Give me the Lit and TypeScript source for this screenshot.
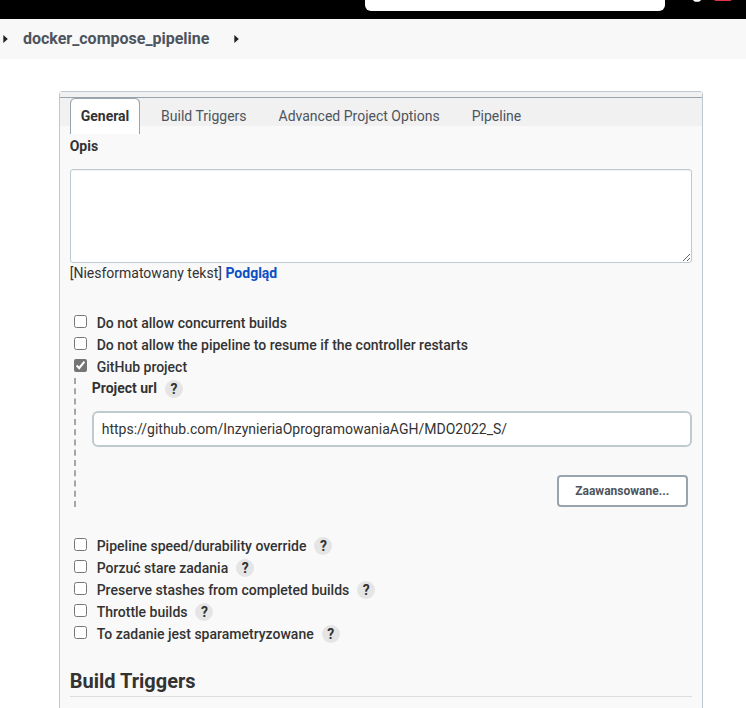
import { LitElement, html, css, nothing } from "lit";
import { customElement, property } from "lit/decorators.js";

@customElement("help-mark")
class HelpMark extends LitElement {
  static styles = css`
    :host {
      display: flex;
      align-items: center;
      justify-content: center;
      width: 18px;
      height: 18px;
      border-radius: 50%;
      background: #e5e5e5;
      color: #333;
      font: 700 14px/18px Roboto, sans-serif;
    }
  `;
  render() {
    return html`?`;
  }
}

@customElement("option-row")
class OptionRow extends LitElement {
  @property() label = "";
  @property({ type: Boolean }) checked = false;
  @property({ type: Boolean }) help = false;

  static styles = css`
    :host {
      display: flex;
      align-items: center;
      height: 22px;
      padding-left: 4px;
      font: 500 14px/22px Roboto, sans-serif;
      color: #333;
    }
    label {
      display: flex;
    }
    input {
      width: 13px;
      height: 13px;
      margin: 3px 10px 0 0;
      accent-color: #757575;
    }
    help-mark {
      margin-left: 8px;
    }
  `;
  render() {
    return html`
      <label><input type="checkbox" .checked=${this.checked} />${this.label}</label>
      ${this.help ? html`<help-mark></help-mark>` : nothing}
    `;
  }
}

@customElement("app-root")
class AppRoot extends LitElement {
  static styles = css`
    :host {
      display: flex;
      flex-direction: column;
      height: 708px;
      overflow: hidden;
      background: #fff;
      color: #333;
      font: 400 14px/20px Roboto, sans-serif;
    }
    * {
      box-sizing: border-box;
    }
    .top {
      display: flex;
      flex: none;
      height: 19px;
      padding-left: 365px;
      background: #000;
    }
    .search {
      width: 300px;
      height: 11px;
      border-radius: 0 0 6px 6px;
      background: #fff;
    }
    .top svg {
      margin-left: 27px;
    }
    .crumbs {
      display: flex;
      flex: none;
      align-items: center;
      height: 40px;
      padding-left: 2.7px;
      background: #f8f8f8;
      color: #4d545d;
      font-size: 16px;
      font-weight: 700;
    }
    .crumbs span {
      margin: 0 24.4px 0 15.2px;
    }
    .panel {
      flex: none;
      width: 644px;
      height: 640px;
      margin: 32px 0 0 58.7px;
      border: 1px solid #bfcad0;
      border-radius: 3px 3px 0 0;
      background: #f9f9f9;
    }
    .strip {
      height: 34px;
      padding-top: 5px;
      background: #f1f1f1;
    }
    .tabs {
      display: flex;
      border-top: 1px solid #98a5af;
      padding-left: 10px;
    }
    .tab {
      height: 36px;
      padding: 0 16px;
      line-height: 36px;
      color: #4d545d;
    }
    .active {
      width: 70px;
      margin-right: 5.4px;
      padding: 0 0 0 10px;
      border: 1px solid #98a5af;
      border-width: 0 1px;
      border-radius: 5px 5px 0 0;
      background: #fff;
      color: #333;
      font-weight: 700;
      box-shadow: inset 0 1px #98a5af;
    }
    .body {
      padding: 10px 10px 0;
    }
    .strong {
      font-weight: 700;
    }
    textarea {
      display: block;
      width: 622px;
      height: 94px;
      margin: 13px 0 0;
      border: 1px solid #bfcad0;
      border-radius: 3px;
      background: #fff;
      box-shadow: inset 0 1px 1px #0000000f;
    }
    .hint a {
      color: #0b4fc4;
      font-weight: 700;
    }
    .group {
      margin-top: 29px;
    }
    .nested {
      display: flex;
      gap: 16px;
      margin-left: 4px;
    }
    .nested svg {
      flex: none;
    }
    .fields {
      flex: 1;
    }
    .caption {
      display: flex;
      align-items: center;
      height: 22px;
    }
    .caption span {
      margin: 0 8px 2px 0;
    }
    .url {
      display: block;
      width: 600px;
      height: 36px;
      margin-top: 11px;
      padding: 0 8px;
      border: 2px solid #bfcad0;
      border-radius: 6px;
      background: #fff;
      color: #333;
      font: 400 14px Roboto, sans-serif;
    }
    button {
      display: block;
      width: 131px;
      height: 32px;
      margin: 28px 4px 0 auto;
      padding: 0;
      border: 2px solid #98a5af;
      border-radius: 4px;
      background: #fff;
      color: #4d545d;
      font: 700 12px Roboto, sans-serif;
    }
    .second {
      margin-top: 27px;
    }
    h2 {
      margin: 23px 0 0;
      height: 29px;
      border-bottom: 1px solid #ddd;
      font: 700 20px/26px Roboto, sans-serif;
    }
  `;

  arrow() {
    return html`<svg width="5" height="8" viewBox="0 0 5 8"><path d="M0.3 0L4.8 4L0.3 8Z" fill="#222" /></svg>`;
  }

  render() {
    return html`
      <div class="top">
        <div class="search"></div>
        <svg width="50" height="4" viewBox="0 0 50 4">
          <ellipse cx="5" cy="0" rx="3.8" ry="1.8" fill="#fff" />
          <rect x="22" y="-4" width="18" height="5" rx="2" fill="#dc3545" />
        </svg>
      </div>
      <div class="crumbs">${this.arrow()}<span>docker_compose_pipeline</span>${this.arrow()}</div>
      <div class="panel">
        <div class="strip">
          <div class="tabs">
            <div class="tab active">General</div>
            <div class="tab">Build Triggers</div>
            <div class="tab">Advanced Project Options</div>
            <div class="tab">Pipeline</div>
          </div>
        </div>
        <div class="body">
          <div class="strong">Opis</div>
          <textarea></textarea>
          <div class="hint">[Niesformatowany tekst] <a>Podgląd</a></div>
          <div class="group">
            <option-row label="Do not allow concurrent builds"></option-row>
            <option-row label="Do not allow the pipeline to resume if the controller restarts"></option-row>
            <option-row label="GitHub project" checked></option-row>
          </div>
          <div class="nested">
            <svg width="2" height="130" viewBox="0 0 2 130">
              <path d="M1 0V129" stroke="#a6a6a6" stroke-width="2" stroke-dasharray="6 4.25" />
            </svg>
            <div class="fields">
              <div class="caption strong"><span>Project url</span><help-mark></help-mark></div>
              <input class="url" value="https://github.com/InzynieriaOprogramowaniaAGH/MDO2022_S/" />
              <button>Zaawansowane...</button>
            </div>
          </div>
          <div class="second">
            <option-row label="Pipeline speed/durability override" help></option-row>
            <option-row label="Porzuć stare zadania" help></option-row>
            <option-row label="Preserve stashes from completed builds" help></option-row>
            <option-row label="Throttle builds" help></option-row>
            <option-row label="To zadanie jest sparametryzowane" help></option-row>
          </div>
          <h2>Build Triggers</h2>
        </div>
      </div>
    `;
  }
}
